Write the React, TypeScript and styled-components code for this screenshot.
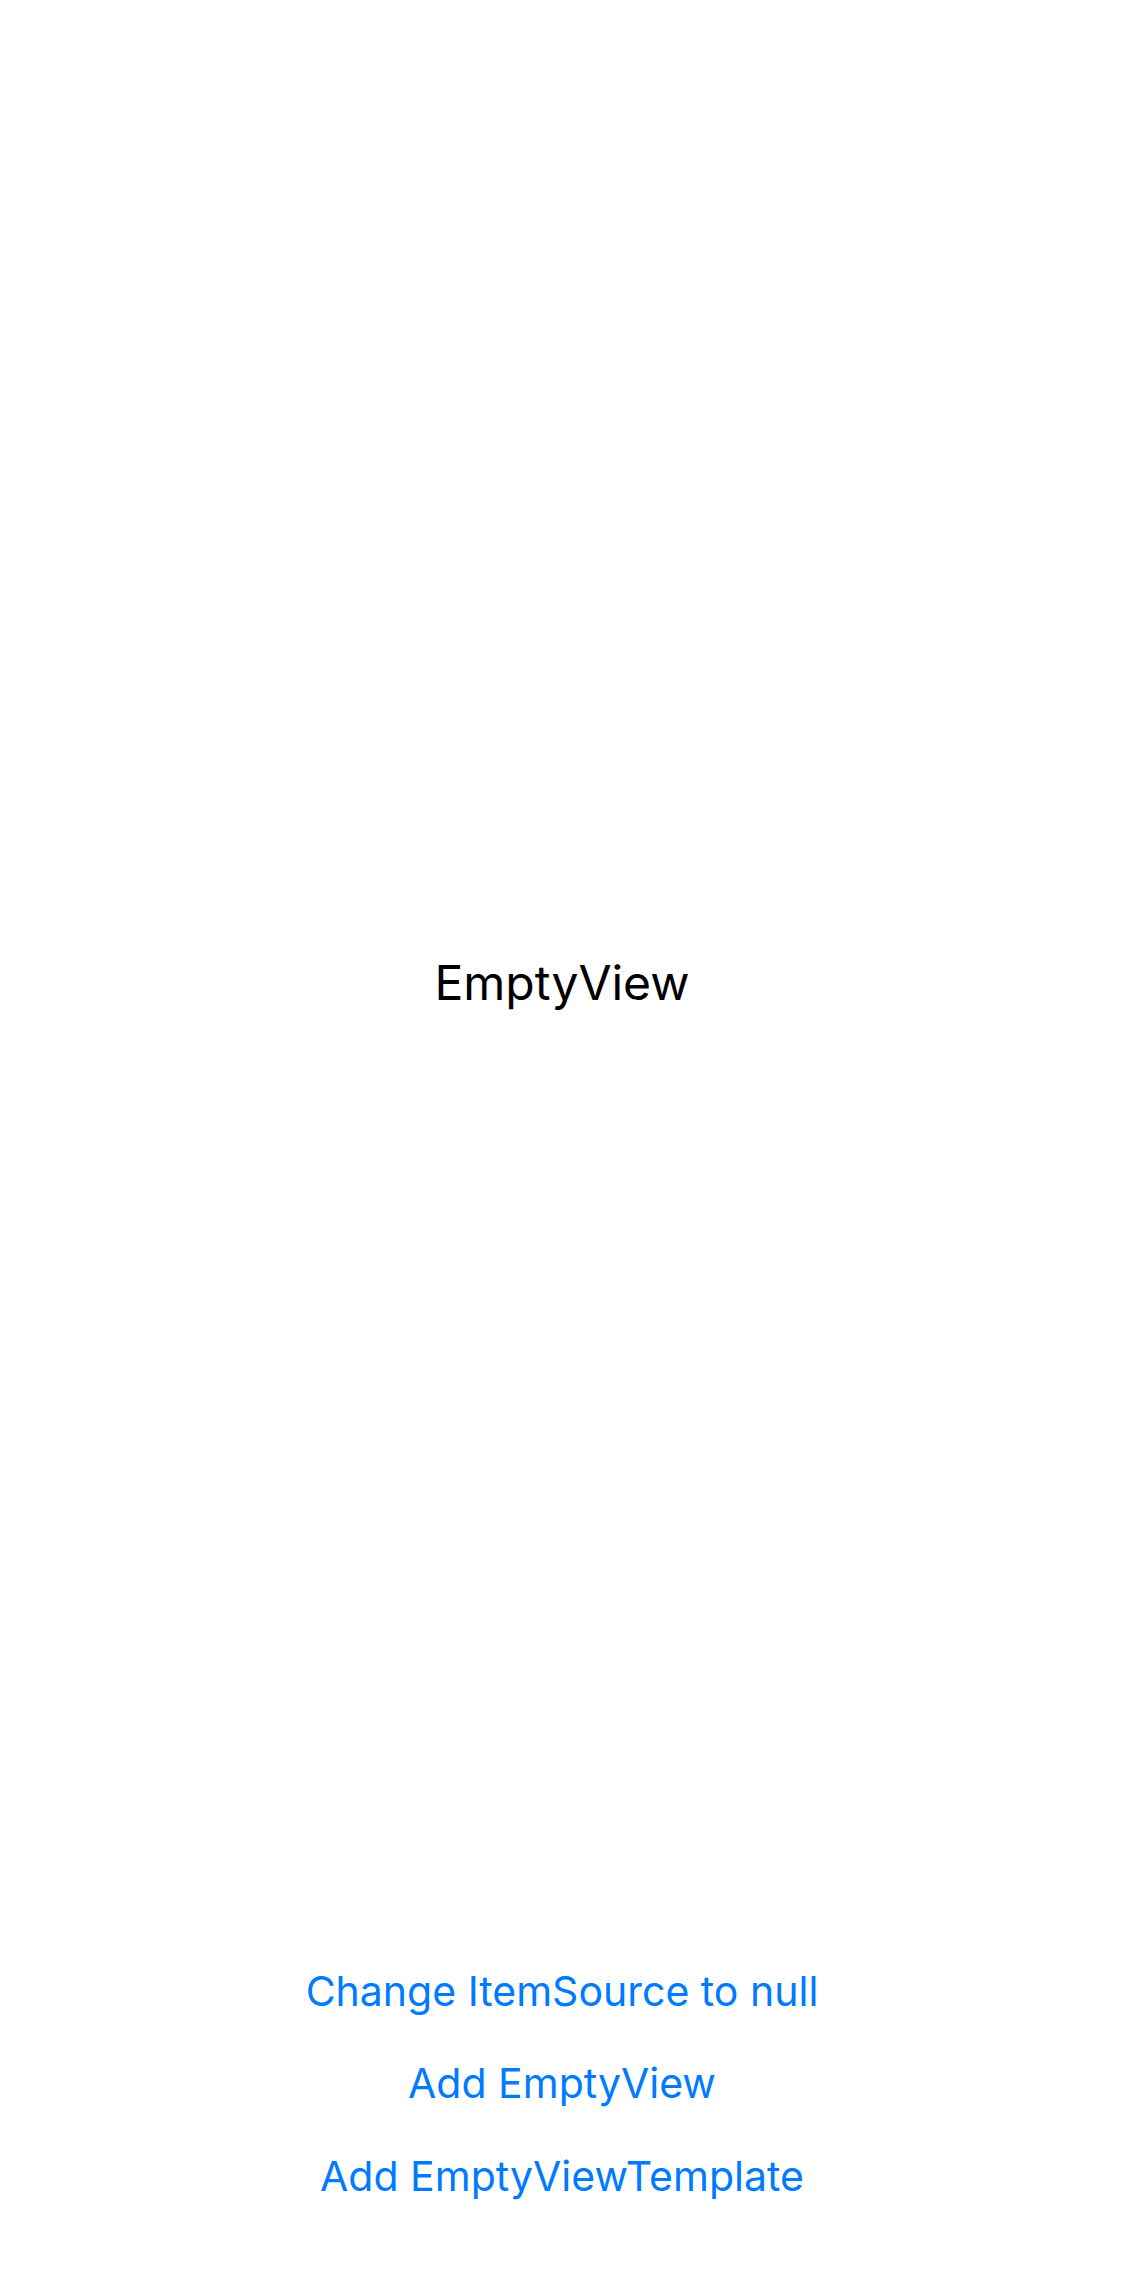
import styled, { createGlobalStyle } from 'styled-components'

const GlobalStyle = createGlobalStyle`
  html, body {
    margin: 0;
    padding: 0;
    background: #ffffff;
  }
  body {
    font-family: Inter, 'Noto Sans', 'Liberation Sans', sans-serif;
    -webkit-font-smoothing: antialiased;
  }
`

const Page = styled.div`
  display: flex;
  flex-direction: column;
  width: 1124px;
  height: 2286px;
  background: #ffffff;
`

const CollectionArea = styled.div`
  flex: 1;
  display: flex;
  align-items: center;
  justify-content: center;
  padding-top: 22px;
`

const EmptyLabel = styled.div`
  font-size: 48px;
  line-height: 1.21;
  color: #000000;
`

const ButtonStack = styled.div`
  display: flex;
  flex-direction: column;
  align-items: center;
  padding-bottom: 64px;
`

const LinkButton = styled.button`
  height: 92.5px;
  border: none;
  background: none;
  padding: 0 16px;
  font-family: inherit;
  font-size: 41px;
  line-height: 92px;
  color: #007aff;
  cursor: pointer;
`

const actions = ['Change ItemSource to null', 'Add EmptyView', 'Add EmptyViewTemplate']

const App = () => {
  return (
    <>
      <GlobalStyle />
      <Page>
        <CollectionArea>
          <EmptyLabel>EmptyView</EmptyLabel>
        </CollectionArea>
        <ButtonStack>
          {actions.map((label) => (
            <LinkButton key={label}>{label}</LinkButton>
          ))}
        </ButtonStack>
      </Page>
    </>
  )
}

export default App
